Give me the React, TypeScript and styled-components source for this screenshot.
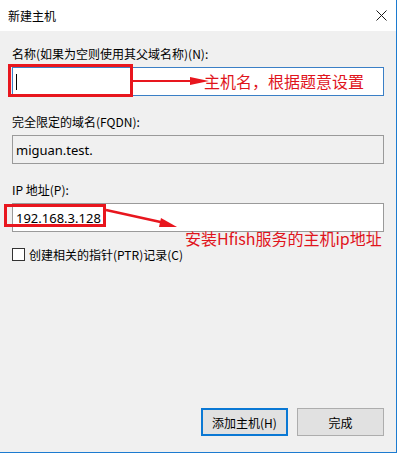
import React from "react";
import styled, { createGlobalStyle } from "styled-components";

const GlobalStyle = createGlobalStyle`
  html, body {
    margin: 0;
    padding: 0;
    background: #ffffff;
  }
  body {
    font-family: "Noto Sans", "Noto Sans CJK SC", sans-serif;
    font-size: 12px;
    color: #000;
  }
`;

const Page = styled.div`
  width: 402px;
  height: 458px;
  overflow: hidden;
  background: #fff;
`;

const Dialog = styled.div`
  width: 397px;
  height: 453px;
  box-sizing: border-box;
  border-right: 1px solid #1c7bd0;
  border-bottom: 1px solid #1c7bd0;
  display: flex;
  flex-direction: column;
  background: #f0f0f0;
`;

const TitleBar = styled.div`
  height: 31px;
  flex: none;
  background: #fff;
  display: flex;
  align-items: center;
  justify-content: space-between;
  padding: 0 9px 0 8px;
  font-family: "Noto Sans CJK SC", sans-serif;
  font-size: 12px;
`;

const CloseBtn = styled.div`
  width: 12px;
  height: 12px;
  display: flex;
  align-items: center;
  justify-content: center;
`;

const Body = styled.div`
  flex: 1;
  display: flex;
  flex-direction: column;
  padding: 15px 12px 16px 12px;
`;

const Field = styled.div<{ $gap?: number }>`
  position: relative;
  display: flex;
  flex-direction: column;
  margin-top: ${(p) => p.$gap ?? 0}px;
`;

const Label = styled.div`
  font-family: "Noto Sans CJK SC", sans-serif;
  font-size: 12px;
  line-height: 16px;
  margin-bottom: 5px;
  white-space: nowrap;
`;

const TextBox = styled.div<{ $tone: "focus" | "readonly" | "normal" }>`
  position: relative;
  height: 29px;
  box-sizing: border-box;
  border: 1px solid
    ${(p) => (p.$tone === "focus" ? "#3a7fc6" : "#9a9a9a")};
  background: ${(p) => (p.$tone === "readonly" ? "#f0f0f0" : "#ffffff")};
  display: flex;
  align-items: center;
  padding: 0 3px;
  font-family: "Noto Sans", "Noto Sans CJK SC", sans-serif;
  font-size: 13px;
  white-space: nowrap;
`;

const Caret = styled.span`
  display: block;
  width: 1px;
  height: 16px;
  background: #000;
`;

const CheckRow = styled.label`
  display: flex;
  align-items: center;
  gap: 4px;
  height: 16px;
  margin-top: 14px;
  font-family: "Noto Sans CJK SC", sans-serif;
  font-size: 12px;
  white-space: nowrap;
`;

const CheckBox = styled.span`
  width: 13px;
  height: 13px;
  box-sizing: border-box;
  border: 1px solid #333;
  background: #fff;
  flex: none;
`;

const Footer = styled.div`
  margin-top: auto;
  display: flex;
  justify-content: flex-end;
  gap: 9px;
`;

const Button = styled.div<{ $default?: boolean }>`
  width: 87px;
  height: 28px;
  box-sizing: border-box;
  background: #e1e1e1;
  border: ${(p) => (p.$default ? "2px solid #0a78d4" : "1px solid #adadad")};
  display: flex;
  align-items: center;
  justify-content: center;
  font-family: "Noto Sans CJK SC", sans-serif;
  font-size: 12px;
  color: #000;
`;

/* red annotations drawn over the dialog */
const RedBox = styled.div<{ $l: number; $t: number; $w: number; $h: number }>`
  position: absolute;
  left: ${(p) => p.$l}px;
  top: ${(p) => p.$t}px;
  width: ${(p) => p.$w}px;
  height: ${(p) => p.$h}px;
  box-sizing: border-box;
  border: 3px solid #e8161e;
  pointer-events: none;
`;

const Arrow = styled.svg`
  position: absolute;
  left: 0;
  top: 0;
  overflow: visible;
  pointer-events: none;
`;

const Note = styled.div<{ $l: number; $t: number }>`
  position: absolute;
  left: ${(p) => p.$l}px;
  top: ${(p) => p.$t}px;
  font-family: "Noto Sans CJK SC", sans-serif;
  font-size: 16px;
  line-height: 18px;
  color: #e0141c;
  white-space: nowrap;
`;

export default function App() {
  return (
    <Page>
      <GlobalStyle />
      <Dialog>
        <TitleBar>
          <span>新建主机</span>
          <CloseBtn>
            <svg width="11" height="11" viewBox="0 0 11 11">
              <path d="M0.5 0.5 L10.5 10.5 M10.5 0.5 L0.5 10.5" stroke="#1a1a1a" strokeWidth="1" />
            </svg>
          </CloseBtn>
        </TitleBar>
        <Body>
          <Field>
            <Label>名称(如果为空则使用其父域名称)(N):</Label>
            <TextBox $tone="focus">
              <Caret />
            </TextBox>
            <RedBox $l={-4} $t={18} $w={125} $h={33} />
            <Arrow width="1" height="1">
              <line x1="121" y1="35" x2="182" y2="35" stroke="#e8161e" strokeWidth="2" />
              <polygon points="178,31 197,35 178,39" fill="#e8161e" />
            </Arrow>
            <Note $l={192} $t={26}>主机名，根据题意设置</Note>
          </Field>

          <Field $gap={18}>
            <Label>完全限定的域名(FQDN):</Label>
            <TextBox $tone="readonly">miguan.test.</TextBox>
          </Field>

          <Field $gap={18}>
            <Label>IP 地址(P):</Label>
            <TextBox $tone="normal">192.168.3.128</TextBox>
            <RedBox $l={-8} $t={22} $w={102} $h={23} />
            <Arrow width="1" height="1">
              <line x1="94" y1="28" x2="153" y2="41" stroke="#e8161e" strokeWidth="2.5" />
              <polygon points="149,36 165,45 147,45" fill="#e8161e" />
            </Arrow>
            <Note $l={173} $t={47}>安装Hfish服务的主机ip地址</Note>
          </Field>

          <CheckRow>
            <CheckBox />
            <span>创建相关的指针(PTR)记录(C)</span>
          </CheckRow>

          <Footer>
            <Button $default>添加主机(H)</Button>
            <Button>完成</Button>
          </Footer>
        </Body>
      </Dialog>
    </Page>
  );
}
